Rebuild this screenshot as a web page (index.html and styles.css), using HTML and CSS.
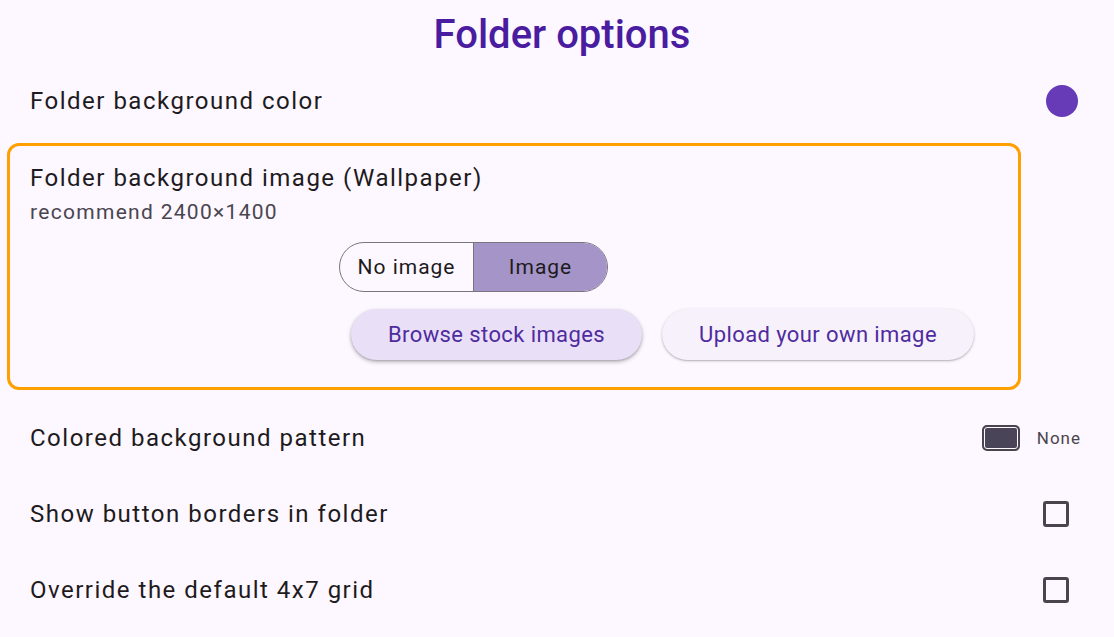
FILE: index.html
```html
<!DOCTYPE html>
<html>
<head>
<meta charset="utf-8">
<link rel="stylesheet" href="styles.css">
</head>
<body>
<div class="page">
  <h1 class="title">Folder options</h1>
  <div class="row">
    <span class="label">Folder background color</span>
    <span class="swatch"></span>
  </div>
  <div class="box">
    <div class="box-title">Folder background image (Wallpaper)</div>
    <div class="box-sub">recommend 2400×1400</div>
    <div class="seg">
      <div class="seg-item">No image</div>
      <div class="seg-item selected">Image</div>
    </div>
    <div class="btns">
      <button class="btn tonal">Browse stock images</button>
      <button class="btn elevated">Upload your own image</button>
    </div>
  </div>
  <div class="row row-gap">
    <span class="label">Colored background pattern</span>
    <span class="trail">
      <span class="pattern"></span>
      <span class="none">None</span>
    </span>
  </div>
  <div class="row">
    <span class="label">Show button borders in folder</span>
    <span class="check"></span>
  </div>
  <div class="row">
    <span class="label">Override the default 4x7 grid</span>
    <span class="check"></span>
  </div>
</div>
</body>
</html>
```

FILE: styles.css
```css
* { box-sizing: border-box; }
html, body { margin: 0; padding: 0; }
body {
  background: #fdf7ff;
  font-family: Roboto, "Noto Sans", sans-serif;
  color: #1d1b20;
  width: 1114px;
  height: 637px;
  overflow: hidden;
}
.page { display: flex; flex-direction: column; }
.title {
  margin: 0;
  height: 63px;
  line-height: 70px;
  text-align: center;
  font-size: 40px;
  font-weight: 500;
  color: #4a1c9f;
  letter-spacing: 0;
  padding-left: 10px;
}
.row {
  height: 76px;
  display: flex;
  align-items: center;
  justify-content: space-between;
  padding: 0 45px 0 30px;
}
.row-gap { margin-top: 10px; }
.label {
  font-size: 24px;
  letter-spacing: 1.5px;
  color: #1d1b20;
}
.swatch {
  width: 32px; height: 32px; border-radius: 50%;
  background: #673ab7;
  margin-right: -9px;
}
.trail { display: flex; align-items: center; gap: 17px; margin-right: -12px; }
.pattern {
  width: 38px; height: 26px;
  border: 2px solid #49454f;
  border-radius: 5px;
  background: #4a4458;
  box-shadow: inset 0 0 0 1px #fdf7ff;
}
.none { font-size: 17px; color: #49454f; letter-spacing: 1px; }
.check {
  width: 26px; height: 26px;
  border: 3px solid #49454f;
  border-radius: 3px;
  margin-right: 0;
}
.box {
  margin: 4px 0 0 7px;
  width: 1014px;
  height: 247px;
  border: 3px solid #ffa000;
  border-radius: 12px;
  padding: 16px 20px 0 20px;
}
.box-title { font-size: 24px; line-height: 32px; letter-spacing: 1.5px; }
.box-sub { margin-top: 4px; font-size: 21px; line-height: 28px; color: #49454f; letter-spacing: 1.3px; }
.seg {
  margin: 16px 0 0 309px;
  display: flex;
  width: 269px; height: 50px;
  border: 1px solid #79747e;
  border-radius: 25px;
  overflow: hidden;
}
.seg-item {
  flex: 1;
  display: flex; align-items: center; justify-content: center;
  font-size: 21px;
  letter-spacing: 1px;
  color: #1d1b20;
}
.seg-item + .seg-item { border-left: 1px solid #79747e; }
.seg-item.selected { background: #a594c8; }
.btns {
  margin: 17px 0 0 321px;
  display: flex; gap: 20px;
}
.btn {
  height: 51px;
  border: none;
  border-radius: 26px;
  font-family: inherit;
  font-size: 22px;
  color: #4f2ba0;
  letter-spacing: 0.4px;
  display: flex; align-items: center; justify-content: center;
}
.btn.tonal {
  width: 291px;
  background: #e9dff7;
  box-shadow: 0 2px 4px rgba(0,0,0,0.25), 0 1px 2px rgba(0,0,0,0.15);
}
.btn.elevated {
  width: 312px;
  background: #f7f1fb;
  box-shadow: 0 1px 3px rgba(0,0,0,0.22), 0 1px 1px rgba(0,0,0,0.1);
}
```
